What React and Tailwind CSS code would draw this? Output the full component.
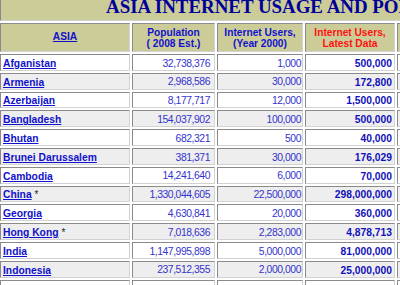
import React from "react";

const rows = [
  ["Afganistan", "", "32,738,376", "1,000", "500,000"],
  ["Armenia", "", "2,968,586", "30,000", "172,800"],
  ["Azerbaijan", "", "8,177,717", "12,000", "1,500,000"],
  ["Bangladesh", "", "154,037,902", "100,000", "500,000"],
  ["Bhutan", "", "682,321", "500", "40,000"],
  ["Brunei Darussalem", "", "381,371", "30,000", "176,029"],
  ["Cambodia", "", "14,241,640", "6,000", "70,000"],
  ["China", "*", "1,330,044,605", "22,500,000", "298,000,000"],
  ["Georgia", "", "4,630,841", "20,000", "360,000"],
  ["Hong Kong", "*", "7,018,636", "2,283,000", "4,878,713"],
  ["India", "", "1,147,995,898", "5,000,000", "81,000,000"],
  ["Indonesia", "", "237,512,355", "2,000,000", "25,000,000"],
  ["", "", "", "", ""],
];

const cell =
  "border border-t-[#8a8a8a] border-l-[#8a8a8a] border-b-[#d2d2d2] border-r-[#d2d2d2]";

export default function App() {
  return (
    <div className="w-[400px] h-[285px] overflow-hidden bg-white">
      <div
        className="-mt-[3px] grid grid-cols-[130px_83px_86px_90px_100px] gap-x-[2px] gap-y-[2px] bg-white"
        style={{ fontFamily: '"Liberation Sans", Arial, sans-serif' }}
      >
        <div
          className={`${cell} col-span-5 h-[24px] bg-[#cccc99] pl-[105px] flex items-end pb-[3px]`}
        >
          <span
            className="text-[18.9px] font-bold leading-none text-[#000099] whitespace-nowrap"
            style={{ fontFamily: '"Liberation Serif", "Times New Roman", serif' }}
          >
            ASIA INTERNET USAGE AND POPULATION STATISTICS
          </span>
        </div>

        <div className={`${cell} h-[29px] bg-[#cccc99] flex items-center justify-center`}>
          <a href="#" className="text-[10.2px] font-bold text-[#1111cc] underline leading-none">
            ASIA
          </a>
        </div>
        <div className={`${cell} h-[29px] bg-[#cccc99] flex flex-col items-center justify-center text-[10.2px] font-bold leading-[11px] text-[#1111cc]`}>
          <span>Population</span>
          <span>( 2008 Est.)</span>
        </div>
        <div className={`${cell} h-[29px] bg-[#cccc99] flex flex-col items-center justify-center text-[10.2px] font-bold leading-[11px] text-[#1111cc]`}>
          <span>Internet Users,</span>
          <span>(Year 2000)</span>
        </div>
        <div className={`${cell} h-[29px] bg-[#cccc99] flex flex-col items-center justify-center text-[10.2px] font-bold leading-[11px] text-[#ff1111]`}>
          <span>Internet Users,</span>
          <span>Latest Data</span>
        </div>
        <div className={`${cell} h-[29px] bg-[#cccc99]`} />

        {rows.map((r, i) => {
          const bg = i % 2 === 0 ? "bg-white" : "bg-[#eeeeee]";
          return (
            <React.Fragment key={i}>
              <div className={`${cell} ${bg} h-[16.8px] flex items-center pt-[3px] pl-[2px] whitespace-nowrap`}>
                {r[0] && (
                  <a href="#" className="text-[10.3px] font-bold text-[#1111cc] underline leading-none">
                    {r[0]}
                  </a>
                )}
                {r[1] && (
                  <span className="text-[10px] text-[#222222] leading-none ml-[3px]">{r[1]}</span>
                )}
              </div>
              <div className={`${cell} ${bg} h-[16.8px] flex items-center justify-end pt-[3px] pr-[4px] text-[10.4px] tracking-[-0.45px] text-[#3333cc] leading-none`}>
                {r[2]}
              </div>
              <div className={`${cell} ${bg} h-[16.8px] flex items-center justify-end pt-[3px] pr-[1px] text-[10.4px] tracking-[-0.45px] text-[#3333cc] leading-none`}>
                {r[3]}
              </div>
              <div className={`${cell} ${bg} h-[16.8px] flex items-center justify-end pt-[3px] pr-[2px] text-[10.3px] font-bold text-[#1111bb] leading-none`}>
                {r[4]}
              </div>
              <div className={`${cell} ${bg} h-[16.8px]`} />
            </React.Fragment>
          );
        })}
      </div>
    </div>
  );
}
